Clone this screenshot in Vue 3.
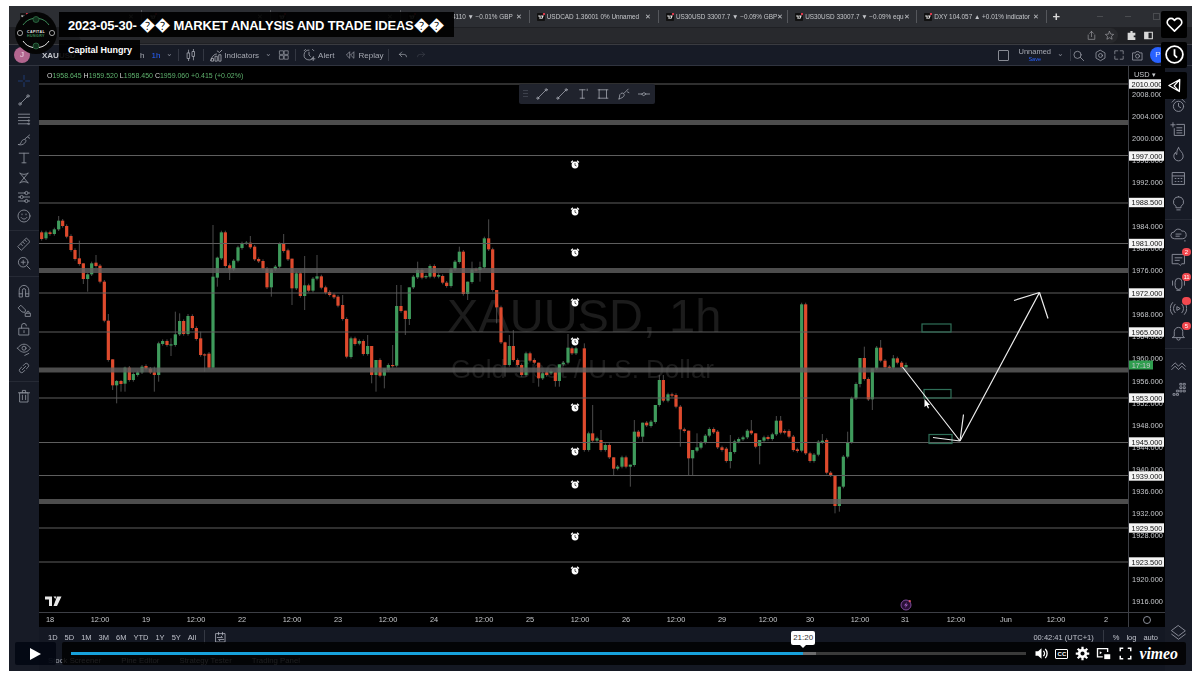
<script setup>
import { h } from "vue";

// trazos de los iconos, en una caja de 20x20
const paths = {
  cross: "M10 3v5M10 12v5M3 10h5M12 10h5",
  line: "M5 15 15 5M6.5 15a1.5 1.5 0 1 1-3 0 1.5 1.5 0 0 1 3 0zM16.5 5a1.5 1.5 0 1 1-3 0 1.5 1.5 0 0 1 3 0z",
  fib: "M3 4h14M3 8h14M3 12h12M3 16h12M15 12a1 1 0 1 0 2 0 1 1 0 0 0-2 0zM15 16a1 1 0 1 0 2 0 1 1 0 0 0-2 0z",
  brush: "M3 17c3 0 3-2 4-4 1-2 3-3 5-2 1 1 0 3-1 4-2 2-5 3-8 2zM11 10l6-5M15 8l2 1",
  text: "M4 4h12M10 4v12M7.5 16h5",
  pattern: "M5 4l10 12M15 4 5 16M5 4c3 2 7 2 10 0M5 16c3-2 7-2 10 0",
  predict: "M3 5h8M15 5h2M3 10h2M9 10h8M3 15h8M15 15h2M11 5a2 2 0 1 0 4 0 2 2 0 0 0-4 0zM5 10a2 2 0 1 0 4 0 2 2 0 0 0-4 0zM11 15a2 2 0 1 0 4 0 2 2 0 0 0-4 0z",
  smile: "M17.5 10a7.5 7.5 0 1 1-15 0 7.5 7.5 0 0 1 15 0zM6.5 12c1.5 2.500 5.500 2.500 7 0M7.500 7.500v1M12.500 7.500v1",
  ruler: "M2.500 13 13 2.500l4.500 4.500L7 17.500zM6 10l2 2M8.500 7.500l2 2M11 5l2 2",
  zoom: "M15 9a6 6 0 1 1-12 0 6 6 0 0 1 12 0zM13.500 13.500 17.500 17.500M9 6.500v5M6.500 9h5",
  magnet: "M4 17V9a6 6 0 0 1 12 0v8h-4V9a2 2 0 0 0-4 0v8zM4 13.500h4M12 13.500h4",
  pencilLock: "M3 7 6 4l6 6-1 3-3-.500zM12 14h6v4h-6zM13.500 14v-1a1.500 1.500 0 0 1 3 0v1",
  lock: "M4 9h12v8.500H4zM7 9V6a3 3 0 0 1 6 0M10 12v2.500",
  eye: "M2 9s3-5 8-5 8 5 8 5-3 5-8 5-8-5-8-5zM12.500 9a2.500 2.500 0 1 1-5 0 2.500 2.500 0 0 1 5 0zM11 18l5-2.500",
  link: "M8 12l4-4M7 9 4.500 11.500a3 3 0 0 0 4 4L11 13M13 11l2.500-2.500a3 3 0 0 0-4-4L9 7",
  trash: "M5 6h10v11.500H5zM3 6h14M8 6V3h4v3M8 9v5.500M12 9v5.500",
  alarm: "M16 11a6 6 0 1 1-12 0 6 6 0 0 1 12 0zM10 7.500V11l2.500 1.500M2.500 6 6 2.500M17.500 6 14 2.500",
  listPlus: "M8 4h9v13H5V9M8 8h6M8 11h6M8 14h6M3.500 2v5M1 4.500h5",
  flame: "M10 2c1 4 5.500 5 5.500 10a5.500 5.500 0 0 1-11 0c0-2 1-3.500 2-4.500 0 2 1 2.500 1.500 2.500 0-3 0-5.500 2-8z",
  calendar: "M3 3h14v14H3zM3 7h14M6 10h1M9.500 10h1M13 10h1M6 13.500h1M9.500 13.500h1M13 13.500h1",
  bulb: "M10 2a6 6 0 0 0-3 11.200V15h6v-1.800A6 6 0 0 0 10 2zM8 17.500h4",
  cloud: "M5 15a4 4 0 0 1 0-8 5 5 0 0 1 9-1 4.500 4.500 0 0 1 1 9zM7 9.500h6M7 12h4M17 17.500h1",
  chat: "M3 4h14v11h-3l-2 2-2-2H3zM6 8h8M6 11h5",
  mic: "M6 8a4 4 0 0 1 8 0v5a4 4 0 0 1-8 0zM3 7v5M17 7v5M8 18h4",
  signal: "M6 5a7 7 0 0 0 0 10M14 5a7 7 0 0 1 0 10M3 3a10 10 0 0 0 0 14M17 3a10 10 0 0 1 0 14M8.500 8l3.500 2-3.500 2z",
  bell: "M5 14V9a5 5 0 0 1 10 0v5l2 2H3zM8 17a2 2 0 0 0 4 0",
  wave: "M2 12l4-4 4 4 4-4 4 4M2 16l4-4 4 4 4-4 4 4",
  dots: "M12 4h2v2h-2zM16 4h2v2h-2zM12 8h2v2h-2zM16 8h2v2h-2zM8 12h2v2H8zM12 12h2v2h-2zM16 12h2v2h-2zM4 16h2v2H4zM8 16h2v2H8z",
  layers: "M10 2 18 8l-8 6-8-6zM2 12l8 6 8-6",
  candles: "M5 7h3v8H5zM6.500 3v4M6.500 15v3M12 5h3v7h-3zM13.500 2v3M13.500 12v5",
  indicators: "M2 17c2-6 5-9 8-9M3 17v-3h3v3zM8 17v-6h3v6zM13 17v-8h3v8zM11 4l3 2 3-3",
  grid: "M3 3h6v6H3zM11 3h6v6h-6zM3 11h6v6H3zM11 11h6v6h-6z",
  alertAdd: "M10 3a7 7 0 1 0 6.500 9.500M10 6v4l2 2M3 4l2-2M15 2l2 2M16 13v5M13.500 15.500h5",
  replay: "M9 5 4 10l5 5zM16 5l-5 5 5 5z",
  undo: "M8 5 4 9l4 4M4 9h8a4 4 0 0 1 4 4",
  redo: "M12 5l4 4-4 4M16 9H8a4 4 0 0 0-4 4",
  search: "M14 9a5.500 5.500 0 1 1-11 0 5.500 5.500 0 0 1 11 0zM13 13l5 5",
  gear: "M10 2l6.900 4v8L10 18l-6.900-4V6zM13 10a3 3 0 1 1-6 0 3 3 0 0 1 6 0z",
  expand: "M3 8V3h5M12 3h5v5M17 12v5h-5M8 17H3v-5",
  camera: "M3 6h4l1-2h4l1 2h4v11H3zM13 11a3 3 0 1 1-6 0 3 3 0 0 1 6 0z",
  share: "M4 9v8h12v-8M10 12V3M6.500 6 10 2.500 13.500 6",
  star: "M10 2.500l2.300 5 5.200.500-4 3.500 1.200 5.300L10 14l-4.700 2.800 1.200-5.300-4-3.500 5.200-.500z",
  rangeDate: "M3 4h14v13H3zM7 2v4M13 2v4M5 10h8l-2-2M15 13H7l2 2",
  drawLine: "M4 16 16 4M5.500 16a1.500 1.500 0 1 1-3 0 1.500 1.500 0 0 1 3 0zM17.500 4a1.500 1.500 0 1 1-3 0 1.500 1.500 0 0 1 3 0z",
  drawText: "M5 4h8M9 4v12M6 16h6M16 3v2",
  drawRect: "M5 4h10v12H5zM3 4h2M15 4h2M3 16h2M15 16h2",
  drawBrush: "M3 17l1-6c2-3 5-3 6-1s0 5-7 7zM10 9l6-6M15 7l2 1",
  drawFlat: "M2 10h5M13 10h5M7 10l3-2 3 2-3 2z",
};

const Ico = (props) =>
  h("svg", { class: "ico", viewBox: "0 0 20 20", width: props.size || 15, height: props.size || 15 }, [
    h("path", { d: paths[props.name] }),
  ]);
Ico.props = ["name", "size"];

const leftTools = [
  ["cross", "line", "fib", "brush", "text", "pattern", "predict", "smile"],
  ["ruler", "zoom"],
  ["magnet", "pencilLock", "lock", "eye", "link"],
  ["trash"],
];

const rightTools = [
  [{ n: "alarm" }, { n: "listPlus" }, { n: "flame" }, { n: "calendar" }, { n: "bulb" }],
  [{ n: "cloud" }, { n: "chat", badge: "2" }, { n: "mic", badge: "11" }, { n: "signal", badge: " " }, { n: "bell", badge: "5" }],
  [{ n: "wave" }, { n: "dots" }],
];

const tabs = [
  { text: "" },
  { text: "" },
  { text: "" },
  { text: "4110 ▼ −0.01% GBP", end: true },
  { text: "USDCAD 1.36001 0% Unnamed" },
  { text: "US30USD 33007.7 ▼ −0.09% GBP" },
  { text: "US30USD 33007.7 ▼ −0.09% equ" },
  { text: "DXY 104.057 ▲ +0.01% indicator" },
];

// velas leidas del grafico: x, techo, base, color, mecha arriba, mecha abajo
const seg1 = [
  [5,67,87,"r"],[18,67,85,"g"],[30,67,72,"r"],[43,58,72,"g"],[56,32,58,"g",18],[68,32,48,"r"],[80,48,80,"r"],[93,78,120,"r"],
  [105,120,147,"r"],[118,145,162,"r",92],[130,160,207,"r",160,222],[143,193,207,"g",190,245],[155,160,193,"g"],[168,158,168,"r",135],
  [180,167,215,"r"],[193,215,332,"r"],[205,332,450,"r",312],[218,448,526,"r",448,540],[230,513,526,"g",510,580],[243,513,522,"r",510,545],
  [255,473,521,"g",470,545],[268,473,510,"r"],[280,492,510,"g"],[293,487,495,"g"],[306,470,487,"g"],[318,468,476,"r"],[331,476,487,"r"],
  [343,487,495,"r",470,545],[356,400,495,"g",395,515],[368,393,402,"g"],[381,393,405,"r"],[393,403,405,"g",385,438],[406,373,405,"g",305],
  [419,333,373,"g",310],[431,333,372,"r"],[444,318,372,"g",312],[457,318,354,"r"],[469,354,387,"r"],[482,385,435,"r",365],[494,433,436,"r",430,485],
  [507,431,473,"r"],[519,200,473,"g",45],[532,143,203,"g",140,230],[544,67,145,"g"],[556,67,168,"r"],[569,166,178,"r",160,210],[581,152,178,"g"],
  [594,112,152,"g"],[606,100,114,"g"],[619,98,100,"g"],[631,98,112,"r",78],[644,110,148,"r"],[656,147,154,"r"],[669,153,176,"r"],[681,176,232,"r"],
  [694,178,232,"g",175,260],[706,170,178,"g"],[719,102,170,"g"],[731,102,123,"r",72],[744,121,148,"r"],[756,146,235,"r",146,285],[769,190,235,"g"],
  [781,190,258,"r"],[794,226,258,"g",138,300],[806,226,242,"r"],[819,206,242,"g"],[831,199,206,"g",135],[844,199,233,"r"],[857,232,248,"r"],
  [869,246,255,"r"],[882,254,262,"r"],[894,260,287,"r"],
];
const seg2 = [
  [8,285,327,"r",255],[20,327,440,"r"],[33,385,441,"g"],[45,385,402,"r"],[58,393,401,"g"],[70,393,432,"r"],[83,408,432,"g",375],[95,408,495,"r",408,520],
  [108,450,495,"g",450,545],[120,450,497,"r"],[133,475,497,"g",475,535],[145,465,480,"g"],[158,465,468,"r",405],[170,288,467,"g",225],[183,288,303,"r",225],
  [196,302,327,"r",302,375],[208,232,327,"g",232,345],[220,200,232,"g"],[233,180,202,"g",155],[246,180,203,"r"],[258,198,202,"g"],[270,168,200,"g"],
  [283,168,200,"r"],[296,195,200,"g"],[308,198,218,"r"],[320,218,228,"r"],[333,178,228,"g"],[345,155,178,"g"],[358,125,156,"g",110],[370,125,252,"r"],
  [383,215,252,"g",215,270],[396,178,216,"g",155],[408,178,180,"r"],[420,172,180,"g",155,215],[433,85,172,"g"],[446,85,118,"r",28],[458,118,240,"r"],
  [470,240,292,"r",240,340],[483,292,397,"r"],[495,397,465,"r",395,500],[508,408,465,"g",375],[520,408,450,"r",360],[533,450,465,"r"],[545,465,495,"r"],
  [558,430,495,"g"],[570,430,452,"r"],[583,450,458,"r"],[596,458,505,"r",458,530],[608,490,505,"g"],[620,487,495,"r"],[633,483,490,"g"],[646,487,513,"r",487,530],
  [658,463,513,"g",463,530],[670,458,463,"g"],[684,413,458,"g",372],[696,415,430,"r"],[708,415,430,"g"],[733,415,720,"r",400],[746,670,720,"g"],
  [758,670,692,"r",585],[771,685,692,"g"],[783,690,720,"r",660],[796,705,720,"g"],[808,705,742,"r"],[821,742,776,"r",742,795],[833,770,776,"g"],
  [846,742,770,"g"],[858,742,770,"r"],[871,764,770,"g",764,830],[883,665,765,"g",630],[895,665,680,"r"],
];
const seg3 = [
  [8,428,470,"g",428,488],[20,428,436,"r"],[33,425,438,"g"],[46,375,426,"g",375],[58,300,375,"g",285],[70,300,362,"r",285],[84,343,362,"g"],[96,343,347,"r"],
  [108,345,380,"r"],[121,380,448,"r",375,500],[133,448,453,"r"],[146,452,535,"r",452,585],[158,510,535,"g",510,585],[171,502,512,"g",460],[183,488,503,"g"],
  [196,467,488,"g"],[208,447,467,"g"],[221,447,457,"r"],[233,455,502,"r"],[246,502,510,"r"],[259,506,543,"r"],[271,516,543,"g",465,565],[284,484,516,"g"],
  [296,477,485,"g"],[309,472,478,"g"],[322,452,472,"g"],[334,452,460,"r",420],[347,460,500,"r",460,505],[359,480,498,"g",480,553],[372,472,482,"g"],
  [384,471,477,"r"],[397,463,477,"g"],[409,422,463,"g",408],[422,422,458,"r",408],[434,453,458,"r"],[447,453,470,"r"],[460,470,510,"r"],[472,508,513,"r"],
  [485,73,512,"g"],[497,73,520,"r"],[510,520,543,"r"],[522,524,543,"g"],[535,485,524,"g"],[547,482,487,"g",462],[560,480,578,"r"],[572,578,586,"r"],
  [585,586,678,"r",586,700],[598,620,678,"g",620,695],[610,530,620,"g"],[623,486,530,"g",455],[635,355,486,"g"],[648,312,355,"g"],[660,234,312,"g",234,322],
  [673,234,297,"r",200],[685,297,358,"r"],[697,265,358,"g",265,390],[710,203,265,"g"],[722,203,242,"r",180],[735,242,262,"r"],[748,260,263,"r"],
  [760,235,263,"g",225],[772,235,248,"r"],[785,248,262,"r"],[798,255,262,"g",248,270],
];

const toCandles = (rows, ox, oy) =>
  rows.map(([x, top, bot, c, wt, wb]) => ({
    x: ox + x / 3,
    y: oy + top / 3,
    h: Math.max((bot - top) / 3, 1.2),
    wt: oy + (wt ?? top - 5) / 3,
    wb: oy + (wb ?? bot + 5) / 3,
    color: c === "r" ? "#de4a2d" : "#3f9b5c",
  }));

const candles = [...toCandles(seg1, 40, 210), ...toCandles(seg2, 340, 210), ...toCandles(seg3, 640, 280)];

const thinLines = [84, 155.5, 203, 243.5, 293, 332, 398, 442.5, 475.5, 528, 562];
const thickLines = [122.5, 270.5, 370, 501.5];
const alarms = [165, 212, 253, 303, 342, 408, 452, 485, 537, 571];
const zones = [
  [922, 324, 29, 8],
  [924, 389.500, 27, 8.500],
  [929, 434.500, 23, 9],
];

// eje de precios
const ticks = [2008, 2004, 2000, 1996, 1992, 1984, 1980, 1976, 1968, 1964, 1960, 1956, 1952, 1948, 1944, 1940, 1936, 1932, 1928, 1920, 1916].map((p) => ({
  y: 94 + (2008 - p) * 5.52,
  label: p.toFixed(3),
}));
const priceTags = [
  [84, "2010.000"], [156, "1997.000"], [202.500, "1988.500"], [243.500, "1981.000"], [293, "1972.000"], [332, "1965.000"],
  [398, "1953.000"], [442, "1945.000"], [476, "1939.000"], [528, "1929.500"], [562, "1923.500"],
];

const timeLabels = [
  [50, "18"], [100, "12:00"], [146, "19"], [196, "12:00"], [242, "22"], [292, "12:00"], [338, "23"], [388, "12:00"], [434, "24"], [484, "12:00"],
  [530, "25"], [580, "12:00"], [626, "26"], [676, "12:00"], [722, "29"], [768, "12:00"], [810, "30"], [860, "12:00"], [905, "31"], [956, "12:00"],
  [1006, "Jun"], [1056, "12:00"], [1106, "2"],
];

const ranges = ["1D", "5D", "1M", "3M", "6M", "YTD", "1Y", "5Y", "All"];
const played = ((804 - 71) / 956) * 100;
const buffered = ((817 - 71) / 956) * 100;
</script>

<template>
  <div class="page">
    <div class="window">
      <div class="tabs">
        <div v-for="(t, i) in tabs" :key="i" class="tab">
          <svg class="tv-badge" viewBox="0 0 10 10" width="8" height="8">
            <rect width="10" height="10" rx="1" fill="#111" />
            <path d="M1.500 3h3v4.500H3.200V4.300H1.500zM5.200 3h3.300L6.500 7.500H5.200L6.500 4.300H5.200z" fill="#eee" />
            <circle cx="8.800" cy="1.200" r="1.500" fill="#e0394c" />
          </svg>
          <span class="tab-text" :class="{ end: t.end }">{{ t.text }}</span>
          <span class="tab-x">✕</span>
        </div>
        <span class="tab-plus">+</span>
        <div class="win-controls"><i></i><i></i><b></b></div>
      </div>

      <div class="address">
        <div class="omnibox">
          <Ico name="share" :size="11" />
          <Ico name="star" :size="11" />
        </div>
        <svg class="addr-ic" viewBox="0 0 20 20" width="11" height="11"><path d="M8 2h4v3h5v5h-3v3h3v5H3V5h5z" /></svg>
        <svg class="addr-ic" viewBox="0 0 20 20" width="11" height="11"><path d="M2 3h16v14H2zM10 5v10h6V5z" fill-rule="evenodd" /></svg>
      </div>

      <div class="tvbar">
        <div class="tv-left">
          <span class="avatar">J</span>
          <span class="symbol">XAUUSD</span>
          <span class="interval first">h</span>
          <span class="interval active">1h</span>
          <span class="chev">⌄</span>
          <span class="sep"></span>
          <Ico name="candles" :size="14" />
          <span class="sep"></span>
          <span class="with-ic"><Ico name="indicators" :size="15" />Indicators</span>
          <span class="chev">⌄</span>
          <Ico name="grid" :size="12" />
          <span class="sep"></span>
          <span class="with-ic alert"><Ico name="alertAdd" :size="14" />Alert</span>
          <span class="with-ic replay"><Ico name="replay" :size="12" />Replay</span>
          <span class="sep"></span>
          <span class="undo"><Ico name="undo" :size="12" /></span>
          <span class="redo"><Ico name="redo" :size="12" /></span>
        </div>
        <div class="tv-right">
          <span class="check"></span>
          <span class="layout-name">Unnamed<small>Save</small></span>
          <span class="chev">⌄</span>
          <span class="sep"></span>
          <span class="search-ic"><Ico name="search" :size="13" /></span>
          <Ico name="gear" :size="13" />
          <Ico name="expand" :size="12" />
          <Ico name="camera" :size="13" />
          <span class="profile">P</span>
        </div>
      </div>

      <div class="main">
        <div class="left-tools">
          <div v-for="(group, i) in leftTools" :key="i" class="left-group">
            <span v-for="n in group" :key="n" class="tool" :class="{ blue: n === 'cross' }"><Ico :name="n" :size="16" /></span>
          </div>
        </div>

        <div class="center">
          <div class="chart-row">
            <div class="chart">
              <svg class="chart-svg" viewBox="39 66 1089 546" width="1089" height="546">
                <text x="447" y="331.500" class="wm-big">XAUUSD, 1h</text>
                <text x="451" y="378" class="wm-small">Gold Spot / U.S. Dollar</text>

                <g v-for="(c, i) in candles" :key="i">
                  <line :x1="c.x" :x2="c.x" :y1="c.wt" :y2="c.wb" stroke="#6c6c6c" stroke-width="0.7" />
                  <rect :x="c.x - 1.600" :y="c.y" width="3.200" :height="c.h" :fill="c.color" />
                </g>

                <line v-for="y in thinLines" :key="y" x1="39" x2="1128" :y1="y" :y2="y" stroke="#5e5e5e" stroke-width="1" />
                <rect v-for="y in thickLines" :key="y" x="39" width="1089" :y="y - 2.500" height="5" fill="#606060" fill-opacity="0.8" />

                <g v-for="y in alarms" :key="y" :transform="`translate(575 ${y})`">
                  <path d="M-4 -2.500 -2 -4.300M4 -2.500 2 -4.300" stroke="#fff" stroke-width="1.200" />
                  <circle r="3.400" fill="#fff" />
                  <path d="M0 -2V.3L1.500 1" stroke="#111" stroke-width="0.700" fill="none" />
                </g>

                <rect v-for="(z, i) in zones" :key="i" :x="z[0]" :y="z[1]" :width="z[2]" :height="z[3]" fill="none" stroke="#2f6f58" stroke-width="1.200" />

                <g class="arrows">
                  <path d="M902.500 367 960 441M933 437.500 960 441M963.500 414.500 960 441" />
                  <path d="M960 441 1039.500 292.500M1014 300.500 1039.500 292.500M1048 318.500 1039.500 292.500" />
                </g>
                <path d="M924.500 399V407L926.500 405.500 928 408.500 929 408 927.800 405 930 405z" fill="#fff" />

                <path d="M45 596.500h7v9.500h-3v-6.500h-4zM53.500 596.500h2.800l-1 2.500zM57 596.500h4.500L57 606h-3.500z" fill="#e8e8e8" />

                <g transform="translate(906 605)">
                  <circle r="5" fill="#2a1036" stroke="#7e4a9a" stroke-width="1" />
                  <path d="M1 -3 -2 .6H0L-1 3 2 -.6H0z" fill="#a25fc4" />
                  <circle cx="3.800" cy="-3.800" r="1.100" fill="#e8556a" />
                </g>
              </svg>
              <div class="ohlc">
                <span class="ohlc-key">O</span>1958.645 <span class="ohlc-key">H</span>1959.520 <span class="ohlc-key">L</span>1958.450
                <span class="ohlc-key">C</span>1959.060 +0.415 (+0.02%)
              </div>
              <div class="draw-bar">
                <span class="grip"></span>
                <Ico name="drawLine" :size="14" />
                <Ico name="drawLine" :size="14" />
                <Ico name="drawText" :size="14" />
                <Ico name="drawRect" :size="14" />
                <Ico name="drawBrush" :size="14" />
                <Ico name="drawFlat" :size="14" />
              </div>
            </div>
            <div class="axis">
              <svg viewBox="1128 66 37 546" width="37" height="546">
                <text x="1133" y="77" class="axis-text">USD ▾</text>
                <text v-for="t in ticks" :key="t.label" x="1146.500" :y="t.y + 2.500" class="axis-text mid">{{ t.label }}</text>
                <g v-for="p in priceTags" :key="p[1]">
                  <rect x="1128" :y="p[0] - 4.700" width="35" height="9.400" fill="#f4f4f4" />
                  <text x="1146" :y="p[0] + 2.500" class="axis-text mid dark">{{ p[1] }}</text>
                </g>
                <rect x="1128" y="360.500" width="24" height="9" fill="#2f9e4f" />
                <text x="1140" y="367.800" class="axis-text mid">17:19</text>
              </svg>
            </div>
          </div>

          <div class="time-row">
            <svg class="time-svg" viewBox="39 612 1089 15" width="1089" height="15">
              <text v-for="(t, i) in timeLabels" :key="i" :x="t[0]" y="622" class="axis-text mid">{{ t[1] }}</text>
            </svg>
            <div class="time-corner"><span class="gear-dot"></span></div>
          </div>

          <div class="range-row">
            <div class="range-left">
              <span v-for="r in ranges" :key="r">{{ r }}</span>
              <span class="sep tall"></span>
              <Ico name="rangeDate" :size="13" />
            </div>
            <div class="range-right">
              <span>00:42:41 (UTC+1)</span>
              <span class="sep tall"></span>
              <span>%</span>
              <span>log</span>
              <span>auto</span>
            </div>
          </div>

          <div class="panel-row">
            <span>Stock Screener</span>
            <span>Pine Editor</span>
            <span>Strategy Tester</span>
            <span>Trading Panel</span>
          </div>
        </div>

        <div class="right-tools">
          <div v-for="(group, i) in rightTools" :key="i" class="right-group">
            <span v-for="t in group" :key="t.n" class="rtool">
              <Ico :name="t.n" :size="17" />
              <em v-if="t.badge" class="badge">{{ t.badge }}</em>
            </span>
          </div>
          <span class="rtool layers"><Ico name="layers" :size="17" /></span>
        </div>
      </div>
    </div>

    <!-- capa del reproductor de video -->
    <svg class="logo" viewBox="0 0 42 42" width="42" height="42">
      <circle cx="21" cy="21" r="21" fill="#050505" />
      <path d="M8 13a15 15 0 0 1 10-6.500M34 13a15 15 0 0 0-10-6.500" stroke="#3c8a58" fill="none" />
      <path d="M8 29a15 15 0 0 0 10 6.500M34 29a15 15 0 0 1-10 6.500" stroke="#e8e8e8" fill="none" />
      <circle cx="21" cy="7.500" r="3" fill="#10301c" stroke="#3c8a58" stroke-width="0.600" />
      <circle cx="21" cy="34" r="3" fill="#10301c" stroke="#3c8a58" stroke-width="0.600" />
      <circle cx="5" cy="21" r="2.600" fill="none" stroke="#ddd" stroke-width="0.700" />
      <circle cx="37" cy="21" r="2.600" fill="none" stroke="#ddd" stroke-width="0.700" />
      <text x="21" y="20.500" class="logo-text">CAPITAL</text>
      <text x="21" y="24.800" class="logo-text green">HUNGRY</text>
    </svg>
    <div class="title-box">
      <div class="title">2023-05-30- <span class="bad-char">��</span> MARKET ANALYSIS AND TRADE IDEAS<span class="bad-char">��</span></div>
      <div class="byline">Capital Hungry</div>
    </div>

    <div class="side-buttons">
      <span class="side-btn">
        <svg viewBox="0 0 20 20" width="19" height="19"><path d="M10 17 3.500 10.500a4 4 0 0 1 0-5.700 4 4 0 0 1 5.700 0l.8.8.8-.8a4 4 0 0 1 5.700 0 4 4 0 0 1 0 5.700z" /></svg>
      </span>
      <span class="side-btn">
        <svg viewBox="0 0 20 20" width="21" height="21"><circle cx="10" cy="10" r="8" /><path d="M10 5v5.500l2.500 2.500" /></svg>
      </span>
      <span class="side-btn">
        <svg viewBox="0 0 20 20" width="15" height="15"><path d="M17 2 2.500 10 16.500 18zM17 2 9.500 10.500l6.500 7" /></svg>
      </span>
    </div>

    <div class="player">
      <button class="play"><span class="play-tri"></span></button>
      <div class="controls">
        <div class="track">
          <div class="track-buffer" :style="{ width: buffered + '%' }"></div>
          <div class="track-played" :style="{ width: played + '%' }"></div>
          <div class="time-tip" :style="{ left: played + '%' }">21:20</div>
        </div>
        <div class="ctrl-icons">
          <svg class="ctrl" viewBox="0 0 20 20" width="15" height="15"><path d="M2 7h3.500L10 3v14l-4.500-4H2z" fill="#fff" /><path d="M12.500 6.500a5 5 0 0 1 0 7M15 4a8.500 8.500 0 0 1 0 12" stroke="#fff" stroke-width="1.800" fill="none" /></svg>
          <span class="cc">CC</span>
          <svg class="ctrl" viewBox="0 0 20 20" width="15" height="15"><circle cx="10" cy="10" r="4.500" fill="none" stroke="#fff" stroke-width="3.500" /><path d="M10 1v3.500M10 15.500V19M1 10h3.500M15.500 10H19M3.600 3.600l2.500 2.500M13.900 13.900l2.500 2.500M3.600 16.400l2.500-2.500M13.900 6.100l2.500-2.500" stroke="#fff" stroke-width="3" /></svg>
          <svg class="ctrl" viewBox="0 0 20 20" width="15" height="15"><path d="M15.500 8V3.500H2v11h7" stroke="#fff" stroke-width="1.800" fill="none" /><path d="M11 11h8v6.500h-8z" fill="#fff" /><path d="M5 7l3 2-3 2z" fill="#fff" /></svg>
          <svg class="ctrl" viewBox="0 0 20 20" width="15" height="15"><path d="M3 7V3h4M17 7V3h-4M3 13v4h4M17 13v4h-4" stroke="#fff" stroke-width="2" fill="none" /></svg>
          <span class="vimeo">vimeo</span>
        </div>
      </div>
    </div>
  </div>
</template>

<style>
html,
body {
  margin: 0;
  background: #fff;
}
</style>

<style scoped>
.page {
  position: relative;
  width: 1200px;
  height: 685px;
  padding: 6px 0 0 9px;
  box-sizing: border-box;
  overflow: hidden;
  background: #fff;
  font-family: "Liberation Sans", Arial, sans-serif;
  color: #b2b5be;
}

/* el video original se ve algo borroso */
.window {
  width: 1183px;
  height: 665px;
  display: flex;
  flex-direction: column;
  background: #131722;
  overflow: hidden;
  filter: blur(0.35px);
}

.ico {
  display: block;
  flex: none;
  fill: none;
  stroke: currentColor;
  stroke-width: 1.1;
  stroke-linejoin: round;
  stroke-linecap: round;
}

/* barra de pestañas */
.tabs {
  height: 21px;
  flex: none;
  display: flex;
  align-items: center;
  padding-left: 4px;
  background: #2c2e33;
  font-size: 6.400px;
  color: #c4c6ca;
  position: relative;
}

.tab {
  width: 129.200px;
  flex: none;
  height: 13px;
  display: flex;
  align-items: center;
  box-sizing: border-box;
  padding: 0 7px 0 7px;
  border-right: 1px solid #55575c;
}

.tv-badge {
  flex: none;
  display: block;
}

.tab-text {
  flex: 1;
  margin-left: 2px;
  white-space: nowrap;
}

.tab-text.end {
  text-align: right;
  padding-right: 3px;
}

.tab-x {
  font-size: 6.500px;
  flex: none;
}

.tab-plus {
  margin-left: 6px;
  font-size: 13px;
  font-weight: bold;
  color: #d8d8d8;
}

.win-controls {
  margin-left: auto;
  margin-right: 32px;
  display: flex;
  gap: 22px;
  align-items: center;
}

.win-controls i {
  width: 6px;
  height: 1px;
  background: #4a4c50;
}

.win-controls b {
  width: 5px;
  height: 5px;
  border: 1px solid #4a4c50;
}

/* barra de direcciones */
.address {
  height: 18px;
  flex: none;
  display: flex;
  align-items: center;
  gap: 6px;
  padding-right: 38px;
  background: #1f2024;
  color: #c4c6ca;
  border-bottom: 1px solid #3a3b40;
  box-sizing: border-box;
}

.omnibox {
  flex: 1;
  height: 15px;
  margin-left: 70px;
  margin-right: 2px;
  display: flex;
  align-items: center;
  justify-content: flex-end;
  gap: 7px;
  padding-right: 3px;
  border-radius: 8px;
  background: #28292d;
  color: #a8a9ad;
}

.addr-ic {
  fill: #d8d8d8;
}

/* barra de TradingView */
.tvbar {
  height: 21px;
  flex: none;
  display: flex;
  align-items: center;
  justify-content: space-between;
  background: #171b26;
  border-bottom: 1px solid #30343f;
  box-sizing: border-box;
  font-size: 8px;
  color: #a7aab3;
}

.tv-left,
.tv-right {
  display: flex;
  align-items: center;
  height: 100%;
}

.avatar {
  width: 16px;
  height: 16px;
  margin-left: 5px;
  border-radius: 50%;
  background: #b2668f;
  color: #f0dce8;
  font-size: 8px;
  line-height: 16px;
  text-align: center;
}

.symbol {
  width: 40px;
  margin-left: 12px;
  font-size: 8px;
  font-weight: bold;
  color: #c4c6cc;
}

.interval.first {
  margin-left: 58px;
}

.interval.active {
  margin-left: 7px;
  color: #2962ff;
}

.chev {
  margin: -3px 0 0 6px;
  color: #7d818c;
  font-size: 8px;
}

.sep {
  width: 1px;
  height: 12px;
  margin: 0 5px;
  background: #343843;
  flex: none;
}

.sep.tall {
  height: 14px;
  margin: 0 8px;
}

.with-ic {
  display: flex;
  align-items: center;
  gap: 0;
}

.with-ic.alert {
  margin-left: 1px;
  gap: 2px;
}

.with-ic.replay {
  margin-left: 9px;
  gap: 3px;
}

.tv-left > .chev + .ico {
  margin-left: 6px;
}

.undo {
  margin-left: 3px;
}

.redo {
  margin-left: 6px;
  opacity: 0.25;
}

.tv-right {
  gap: 6px;
  padding-right: 26px;
}

.tv-right .chev {
  margin-left: 0;
}

.tv-right .sep {
  margin: 0 -5px 0 0;
}

.search-ic {
  margin-right: 3px;
}

.check {
  width: 9px;
  height: 9px;
  border: 1px solid #888b94;
  border-radius: 1px;
  margin-right: 3px;
}

.layout-name {
  display: flex;
  flex-direction: column;
  align-items: center;
  line-height: 8px;
  font-size: 7.500px;
}

.layout-name small {
  font-size: 5.500px;
  line-height: 6px;
  color: #2962ff;
}

.profile {
  width: 16px;
  height: 16px;
  border-radius: 50%;
  background: #2962ff;
  color: #dfe6ff;
  font-size: 8px;
  line-height: 16px;
  text-align: center;
}

/* cuerpo */
.main {
  flex: 1;
  min-height: 0;
  display: flex;
}

.left-tools {
  width: 30px;
  flex: none;
  padding-top: 5px;
  box-sizing: border-box;
  background: #171b26;
  color: #8b8f9a;
}

.left-group + .left-group {
  margin-top: 3.500px;
  padding-top: 3.500px;
  border-top: 1px solid #262a35;
}

.tool {
  height: 19.400px;
  display: flex;
  align-items: center;
  justify-content: center;
}

.tool.blue {
  color: #21407f;
}

.center {
  flex: 1;
  min-width: 0;
  display: flex;
  flex-direction: column;
}

.chart-row {
  height: 546px;
  flex: none;
  display: flex;
}

.chart {
  width: 1089px;
  flex: none;
  position: relative;
  background: #000;
}

.chart-svg,
.axis svg,
.time-svg {
  display: block;
}

.wm-big {
  font-size: 47px;
  fill: #1c1c1c;
  font-family: "Liberation Sans", Arial, sans-serif;
}

.wm-small {
  font-size: 26px;
  fill: #1c1c1c;
  font-family: "Liberation Sans", Arial, sans-serif;
}

.arrows path {
  fill: none;
  stroke: #ececec;
  stroke-width: 1.200;
}

.ohlc {
  position: absolute;
  left: 8px;
  top: 5.500px;
  font-size: 7px;
  white-space: nowrap;
  color: #5fb36e;
}

.ohlc-key {
  color: #d5d5d5;
}

.draw-bar {
  position: absolute;
  left: 480px;
  top: 18px;
  width: 136px;
  height: 20px;
  display: flex;
  align-items: center;
  gap: 6.500px;
  padding-left: 4px;
  box-sizing: border-box;
  border-radius: 2px;
  background: #20232d;
  color: #a7aab3;
}

.grip {
  width: 5px;
  height: 8px;
  flex: none;
  background: repeating-linear-gradient(#3d414c 0 1px, transparent 1px 3px);
}

.axis {
  width: 37px;
  flex: none;
  background: #000;
  border-left: 1px solid #3d3f45;
  box-sizing: border-box;
  overflow: hidden;
}

.axis-text {
  font-size: 7.400px;
  fill: #c6c8cc;
  font-family: "Liberation Sans", Arial, sans-serif;
}

.axis-text.mid {
  text-anchor: middle;
}

.axis-text.dark {
  fill: #111;
}

.time-row {
  height: 15px;
  flex: none;
  display: flex;
  background: #000;
  border-top: 1px solid #3d3f45;
  box-sizing: border-box;
}

.time-svg {
  margin-top: -1px;
}

.time-corner {
  flex: 1;
  border-left: 1px solid #3d3f45;
  display: flex;
  align-items: center;
  justify-content: center;
}

.gear-dot {
  width: 6px;
  height: 6px;
  border: 1px solid #8b8f9a;
  border-radius: 50%;
}

.range-row {
  height: 23px;
  flex: none;
  display: flex;
  justify-content: space-between;
  padding: 3px 0 0 9px;
  box-sizing: border-box;
  background: #141823;
  font-size: 7.500px;
  color: #c0c3cc;
}

.range-left,
.range-right {
  height: 14px;
  display: flex;
  align-items: center;
}

.range-left {
  gap: 7px;
}

.range-left .sep.tall {
  margin: 0 2px 0 1px;
}

.range-right {
  gap: 7px;
  padding-right: 7px;
}

.range-right .sep.tall {
  margin: 0 2px;
}

.panel-row {
  flex: 1;
  display: flex;
  gap: 20px;
  align-items: center;
  padding-left: 9px;
  background: #141823;
  font-size: 7.800px;
  color: #a0a3ab;
}

.right-tools {
  width: 27px;
  flex: none;
  display: flex;
  flex-direction: column;
  padding-top: 27px;
  box-sizing: border-box;
  background: #171b26;
  color: #8b8f9a;
}

.right-group + .right-group {
  margin-top: 3px;
  padding-top: 3px;
  border-top: 1px solid #262a35;
}

.rtool {
  position: relative;
  height: 24.500px;
  display: flex;
  align-items: center;
  justify-content: center;
}

.rtool.layers {
  margin-top: auto;
  margin-bottom: 26px;
}

.badge {
  position: absolute;
  right: 1px;
  top: 1px;
  min-width: 7px;
  height: 8px;
  padding: 0 1px;
  border-radius: 4px;
  background: #f2484f;
  color: #fff;
  font-size: 6px;
  line-height: 8px;
  font-style: normal;
  text-align: center;
}

/* capa de video */
.logo {
  position: absolute;
  left: 15px;
  top: 12px;
}

.logo-text {
  font-size: 3.600px;
  letter-spacing: 0.4px;
  fill: #e8e8e8;
  text-anchor: middle;
  font-weight: bold;
  font-family: "Liberation Sans", Arial, sans-serif;
}

.logo-text.green {
  fill: #3c8a58;
}

.title-box {
  position: absolute;
  left: 59px;
  top: 12px;
  display: flex;
  flex-direction: column;
  align-items: flex-start;
  gap: 3px;
}

.title {
  width: 395px;
  height: 25px;
  padding: 0 9px;
  box-sizing: border-box;
  background: rgba(0, 0, 0, 0.92);
  color: #fff;
  font-size: 13px;
  line-height: 25px;
  font-weight: bold;
  letter-spacing: -0.2px;
  white-space: nowrap;
}

.bad-char {
  font-size: 15px;
  letter-spacing: 0;
}

.byline {
  width: 81px;
  height: 20px;
  padding: 0 9px;
  box-sizing: border-box;
  background: rgba(0, 0, 0, 0.9);
  color: #fff;
  font-size: 9px;
  line-height: 20px;
  font-weight: bold;
  white-space: nowrap;
}

.side-buttons {
  position: absolute;
  left: 1161px;
  top: 11px;
  display: flex;
  flex-direction: column;
  gap: 4px;
}

.side-btn {
  width: 26px;
  height: 26.500px;
  display: flex;
  align-items: center;
  justify-content: center;
  background: #000;
  border-radius: 2px;
}

.side-btn svg {
  fill: none;
  stroke: #fff;
  stroke-width: 1.700;
  stroke-linejoin: round;
}

.player {
  position: absolute;
  left: 15px;
  top: 642px;
  width: 1171px;
  height: 23px;
  display: flex;
  gap: 6px;
}

.play {
  width: 41px;
  height: 23px;
  padding: 0;
  border: 0;
  border-radius: 2px;
  background: rgba(3, 8, 18, 0.92);
  display: flex;
  align-items: center;
  justify-content: center;
}

.play-tri {
  width: 0;
  height: 0;
  border-style: solid;
  border-width: 6.500px 0 6.500px 11px;
  border-color: transparent transparent transparent #fff;
}

.controls {
  flex: 1;
  display: flex;
  align-items: center;
  gap: 8px;
  padding: 0 8px 0 9px;
  border-radius: 2px;
  background: rgba(0, 0, 0, 0.82);
}

.track {
  position: relative;
  flex: 1;
  height: 3px;
  background: #3a3a3a;
}

.track-buffer,
.track-played {
  position: absolute;
  left: 0;
  top: 0;
  height: 100%;
}

.track-buffer {
  background: #6c6c6c;
}

.track-played {
  background: #17a1db;
}

.time-tip {
  position: absolute;
  top: -21px;
  transform: translateX(-50%);
  width: 24px;
  height: 14px;
  border-radius: 2px;
  background: #fff;
  color: #333;
  font-size: 8px;
  line-height: 14px;
  text-align: center;
}

.time-tip::after {
  content: "";
  position: absolute;
  left: 9px;
  top: 14px;
  border-style: solid;
  border-width: 3px 3px 0;
  border-color: #fff transparent transparent;
}

.ctrl-icons {
  display: flex;
  align-items: center;
  gap: 6.500px;
}

.ctrl {
  display: block;
}

.cc {
  width: 11px;
  height: 8px;
  border: 1.200px solid #fff;
  border-radius: 1px;
  color: #fff;
  font-size: 6px;
  line-height: 8px;
  font-weight: bold;
  text-align: center;
}

.vimeo {
  font-family: "Liberation Serif", serif;
  font-style: italic;
  font-weight: bold;
  font-size: 15.800px;
  line-height: 20px;
  color: #fff;
}
</style>
